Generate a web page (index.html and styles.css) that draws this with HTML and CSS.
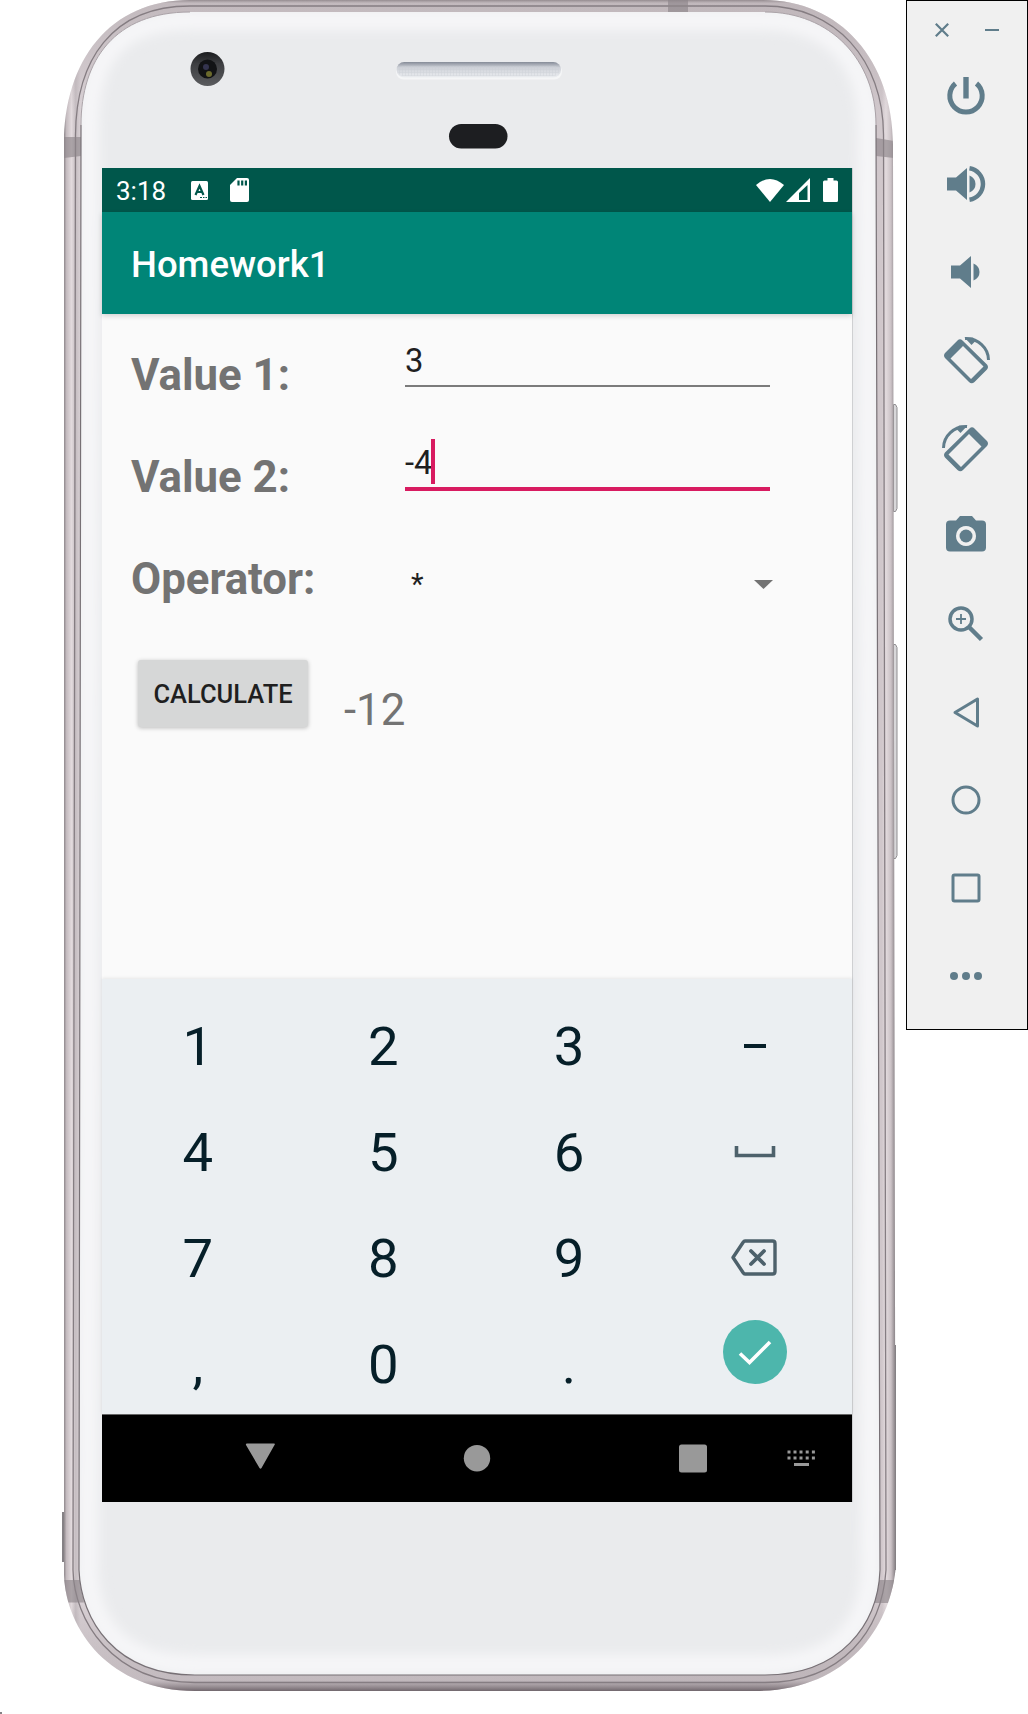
FILE: index.html
```html
<!DOCTYPE html>
<html lang="en">
<head>
<meta charset="utf-8">
<title>Homework1</title>
<link rel="stylesheet" href="styles.css">
</head>
<body>
<div class="stage">
  <div class="phone">
    <svg class="shell" width="906" height="1714" viewBox="0 0 906 1714">
      <defs>
        <linearGradient id="rim" x1="64" x2="896" y1="0" y2="0" gradientUnits="userSpaceOnUse">
          <stop offset="0" stop-color="#8f888c"/><stop offset=".003" stop-color="#c4bbbf"/><stop offset=".009" stop-color="#e2dadd"/><stop offset=".014" stop-color="#c6bec2"/>
          <stop offset=".02" stop-color="#d9d1d5"/><stop offset=".5" stop-color="#d5cdd1"/><stop offset=".983" stop-color="#d0c7cb"/>
          <stop offset=".988" stop-color="#e2dadd"/><stop offset=".994" stop-color="#cbc2c6"/><stop offset="1" stop-color="#7d777b"/>
        </linearGradient>
        <linearGradient id="base" x1="0" x2="0" y1="1600" y2="1691" gradientUnits="userSpaceOnUse">
          <stop offset="0" stop-color="#766d72" stop-opacity="0"/><stop offset=".88" stop-color="#9d9499" stop-opacity=".35"/><stop offset="1" stop-color="#70666c"/>
        </linearGradient>
        <linearGradient id="top" x1="0" x2="0" y1="0" y2="110" gradientUnits="userSpaceOnUse">
          <stop offset="0" stop-color="#8d8488" stop-opacity=".9"/><stop offset=".03" stop-color="#b5acb0" stop-opacity=".6"/><stop offset="1" stop-color="#a79da2" stop-opacity="0"/>
        </linearGradient>
        <filter id="soft" x="-5%" y="-5%" width="110%" height="110%"><feGaussianBlur stdDeviation="6"/></filter>
        <clipPath id="faceclip"><path d="M190 12H765C830 12 876 60 876 125L880 1570C878 1625 840 1675 765 1675H195C115 1675 81 1620 79 1570L81 125C81 60 115 12 190 12Z"/></clipPath>
        <clipPath id="rimclip"><path d="M190 0H763C840 0 893 60 893 145L895.500 1570C889 1630 845 1691 755 1691H195C110 1691 66 1630 64 1575V145C64 60 110 0 190 0Z"/></clipPath>
        <pattern id="mesh" width="3" height="3" patternUnits="userSpaceOnUse"><path d="M0 0H3M0 0V3" stroke="#c9cdd4" stroke-width="1"/></pattern>
        <linearGradient id="slot" x1="0" x2="0" y1="0" y2="1"><stop offset="0" stop-color="#858b97"/><stop offset=".35" stop-color="#cdd0d7"/><stop offset="1" stop-color="#eceef1"/></linearGradient>
        <linearGradient id="lens" x1="0" x2="0" y1="0" y2="1"><stop offset="0" stop-color="#1b1c1e"/><stop offset=".35" stop-color="#3e3f42"/><stop offset="1" stop-color="#5a5b5e"/></linearGradient>
      </defs>
      <path fill="#d8d7d9" stroke="#8f8d90" d="M893.500 404.500h2l1.500 3v101l-1.500 3h-2zM893.500 644.500h2l1.500 3v208l-1.500 3h-2z"/>
      <path fill="#858185" d="M62 1512h3v50h-3zM893 1345h3v225H893zM0 1712h2v2h-2z"/>
      <g clip-path="url(#rimclip)">
        <path fill="url(#rim)" d="M60 0H900V1695H60z"/>
        <path fill="url(#top)" d="M60 0H900V110H60z"/>
        <path fill="url(#base)" d="M60 1600H900V1695H60z"/>
        <path fill="none" stroke="#857d82" stroke-width="1.300" d="M190 6H765C835 6 883.500 60 883.500 135L886 1570C882 1630 843 1682.500 765 1682.500H195C112 1682.500 74 1620 73 1570L75.500 135C76 60 112 6 190 6Z"/>
        <path fill="#8e868a" fill-opacity=".65" d="M64 137L81 137V156L64 158zM876 138L894 141V158L876 156zM668 0h20v12h-20zM64 1580H80L84 1602.500H66zM879 1580H896V1603H874z"/>
      </g>
      <g clip-path="url(#faceclip)">
        <path fill="#eaebed" d="M60 0H900V1700H60z"/>
        <path fill="none" stroke="#f6f6f8" stroke-width="20" filter="url(#soft)" d="M190 20H765C830 20 868 60 868 125L871 1570C869 1625 840 1665 765 1665H195C115 1665 90 1620 88 1570L89 125C89 60 115 20 190 20Z"/>
      </g>
      <path fill="none" stroke="#aaa2a7" d="M190 12C115 12 81 60 81 125M876 125C876 60 830 12 765 12"/>
      <path fill="none" stroke="#777075" stroke-width="1.200" d="M81 125L79 1570C81 1620 115 1675 195 1675H765C840 1675 878 1625 880 1570L876 125"/>
      <circle cx="207.500" cy="69" r="17" fill="url(#lens)"/>
      <circle cx="207.500" cy="69" r="9.500" fill="#121315"/>
      <circle cx="206" cy="67" r="3" fill="#34344e"/><circle cx="209" cy="74" r="3" fill="#6b6a2c"/>
      <rect x="396" y="64" width="166" height="15.500" rx="7.700" fill="#f5f6f7"/>
      <rect x="396.500" y="62" width="164.500" height="15.500" rx="7.700" fill="url(#slot)"/>
      <rect x="398" y="66" width="161" height="10" rx="5" fill="url(#mesh)" opacity=".7"/>
      <rect x="449" y="124" width="58.500" height="24.500" rx="12.200" fill="#1d1e21"/>
      <path stroke="#cfd0d2" d="M852.500 168V1502"/>
    </svg>
    <main class="screen">
      <header class="status">
        <span class="clock">3:18</span>
        <svg width="17" height="19" viewBox="0 0 17 19"><rect width="17" height="19" rx="1.500" fill="#fff"/><path d="M4.500 14L8.500 5L12.500 14M6 11H11" fill="none" stroke="#00574b" stroke-width="2.200"/><path d="M9 16.500h2m1 0h1.500m1 0h1.500" stroke="#00574b" stroke-width="1.200"/></svg>
        <svg class="sd" width="19" height="24" viewBox="0 0 19 24"><path fill="#fff" d="M7 0H17Q19 0 19 2V22Q19 24 17 24H2Q0 24 0 22V7z"/><path stroke="#00574b" stroke-width="2.200" d="M8.500 2.500v5M12.200 2.500v5M15.900 2.500v5"/></svg>
        <span class="spacer"></span>
        <svg width="28" height="23" viewBox="0 0 28 23"><path fill="#fff" d="M0 6Q14-6 28 6L14 23z"/></svg>
        <svg class="signal" width="24" height="24" viewBox="0 0 24 24"><path fill="#fff" fill-rule="evenodd" d="M0 24L24 0V24zM13 22H21.500V7L13 15z"/></svg>
        <svg class="battery" width="15" height="24" viewBox="0 0 15 24"><path fill="#fff" d="M4.500 0h6v2.500H13.500Q15 2.500 15 4V22.500Q15 24 13.500 24H1.500Q0 24 0 22.500V4Q0 2.500 1.500 2.500h3z"/></svg>
      </header>
      <div class="appbar">Homework1</div>
      <section class="form">
        <div class="row"><label>Value 1:</label><div class="field">3</div></div>
        <div class="row"><label>Value 2:</label><div class="field focus">-4<i class="caret"></i></div></div>
        <div class="row"><label>Operator:</label><div class="spinner"><span>*</span><svg width="19" height="9" viewBox="0 0 19 9"><path fill="#737373" d="M0 0H19L9.500 9z"/></svg></div></div>
        <div class="result"><button class="calc">CALCULATE</button><output>-12</output></div>
      </section>
      <section class="keypad">
        <span>1</span><span>2</span><span>3</span><span class="sym"><svg width="24" height="4"><path fill="#061f29" d="M1 0H23V4H1z"/></svg></span>
        <span>4</span><span>5</span><span>6</span><span class="sym"><svg width="42" height="12" viewBox="0 0 42 12"><path fill="none" stroke="#4d616b" stroke-width="3.600" d="M2.500 0V9.500H39.500V0"/></svg></span>
        <span>7</span><span>8</span><span>9</span><span class="sym erase"><svg width="46" height="37" viewBox="0 0 46 37"><path fill="none" stroke="#4d616b" stroke-width="3.400" stroke-linejoin="round" d="M14 2H41.500Q44 2 44 4.500V32.500Q44 35 41.500 35H14Q13 35 12 33.500L2 18.500L12 3.500Q13 2 14 2Z"/><path d="M20 12L33 25M33 12L20 25" stroke="#4d616b" stroke-width="3.800" stroke-linecap="round"/></svg></span>
        <span>,</span><span>0</span><span>.</span><span class="sym enter"><svg width="64" height="64" viewBox="0 0 64 64"><circle cx="32" cy="32" r="32" fill="#4db6ac"/><path fill="none" stroke="#fff" stroke-width="3.600" d="M17 33.500L26.500 42.500L47 22"/></svg></span>
      </section>
      <nav class="navbar">
        <svg width="750" height="87" viewBox="0 0 750 87"><g fill="#999"><path d="M145 28.500H172Q173.500 28.500 172.500 30L159.500 53Q158.500 54.500 157.500 53L144 30Q143.500 28.500 145 28.500z"/><circle cx="375" cy="43.200" r="13.200"/><rect x="577" y="29.500" width="28" height="28" rx="2.500"/><path d="M685.500 35.500h3v3h-3zm6 0h3v3h-3zm6 0h3v3h-3zm6.200 0h3v3h-3zm6.200 0h3v3h-3zM685.500 41.500h3v3h-3zm6 0h3v3h-3zm6 0h3v3h-3zm6.200 0h3v3h-3zm6.200 0h3v3h-3zM692 48h15v3h-15z"/></g></svg>
      </nav>
    </main>
  </div>
  <aside class="toolbar">
    <div class="window">
      <svg width="14" height="14" viewBox="0 0 14 14"><path d="M.8.800L13.200 13.200M13.200.800L.8 13.200" stroke="#607d8b" stroke-width="2.200"/></svg>
      <svg width="14" height="14" viewBox="0 0 14 14"><path d="M0 7H14" stroke="#607d8b" stroke-width="2"/></svg>
    </div>
    <svg class="tool" viewBox="0 0 48 48"><path fill="none" stroke="#607d8b" stroke-width="5" d="M13.500 11.500A16.200 16.200 0 1 0 34.500 11.500"/><path fill="#607d8b" d="M21.300 5h5.400V26.500h-5.400z"/></svg>
    <svg class="tool" viewBox="0 0 48 48"><path fill="#607d8b" d="M5 17.500H14L25 8V40L14 30.500H5zM27.500 15.500Q33.500 18 33.500 24T27.500 32.500z"/><path fill="none" stroke="#607d8b" stroke-width="4.500" d="M27.500 8.200A16 16 0 0 1 27.500 39.800"/></svg>
    <svg class="tool" viewBox="0 0 48 48"><path fill="#607d8b" d="M9 17.500H18L29 8V40L18 30.500H9zM31.500 15.500Q37.500 18 37.500 24T31.500 32.500z"/></svg>
    <svg class="tool" viewBox="0 0 48 48"><g id="rot"><path fill="#607d8b" fill-rule="evenodd" d="M15.500 4.500Q18 2 20.500 4.500L45 28.500Q47 31 45 33.500L32.500 46Q29.500 48.500 27 46L3 22Q1 19.500 3 17zM21 10L8.500 22.500L29 43L41.500 30.500z"/><path fill="none" stroke="#607d8b" stroke-width="3" d="M23 2.500C36 2 46.500 12 46.500 24"/><path fill="#607d8b" d="M22.500 1.500H31L33.500 5L29.500 9z"/></g></svg>
    <svg class="tool" viewBox="0 0 48 48"><use href="#rot" transform="matrix(-1 0 0 1 48 0)"/></svg>
    <svg class="tool" viewBox="0 0 48 48"><path fill="#607d8b" fill-rule="evenodd" d="M18 4H30L34 8.500H40Q44 8.500 44 12.500V35.500Q44 39.500 40 39.500H8Q4 39.500 4 35.500V12.500Q4 8.500 8 8.500H14zM24 14a10 10 0 1 0 .01 0z"/><circle cx="24" cy="24" r="6.500" fill="#607d8b"/></svg>
    <svg class="tool" viewBox="0 0 48 48"><circle cx="19" cy="19" r="11" fill="none" stroke="#607d8b" stroke-width="3.500"/><path stroke="#607d8b" stroke-width="1.800" d="M14 19H24M19 14V24"/><path stroke="#607d8b" stroke-width="4.500" d="M27 27L39.500 39.500"/></svg>
    <svg class="tool" viewBox="0 0 48 48"><path fill="none" stroke="#607d8b" stroke-width="3" stroke-linejoin="round" d="M35.500 11V38L13 24.500z"/></svg>
    <svg class="tool" viewBox="0 0 48 48"><circle cx="24" cy="24" r="13" fill="none" stroke="#607d8b" stroke-width="3"/></svg>
    <svg class="tool" viewBox="0 0 48 48"><rect x="11" y="11" width="26" height="26" rx="1.500" fill="none" stroke="#607d8b" stroke-width="3"/></svg>
    <svg class="tool" viewBox="0 0 48 48"><g fill="#607d8b"><circle cx="12" cy="24" r="4"/><circle cx="24" cy="24" r="4"/><circle cx="36" cy="24" r="4"/></g></svg>
  </aside>
</div>
</body>
</html>
```
FILE: styles.css
```css
* { box-sizing: border-box; }
body { margin: 0; background: #fff; font-family: Roboto, "Liberation Sans", sans-serif; }
svg { display: block; flex: none; }
.stage { display: flex; align-items: flex-start; width: 1028px; height: 1714px; overflow: hidden; }
.phone { position: relative; width: 906px; height: 1714px; padding: 168px 54px 0 102px; }
.shell { position: absolute; left: 0; top: 0; }
.screen { position: relative; width: 750px; height: 1334px; display: flex; flex-direction: column; background: #fafafa; }
.status { height: 44px; flex: none; background: #00574b; display: flex; align-items: center; padding: 0 14px 0 14px; color: #fff; }
.clock { font-size: 26px; line-height: 44px; width: 75px; padding-top: 2px; }
.sd { margin-left: 22px; }
.spacer { flex: 1; }
.signal { margin-left: 2px; }
.battery { margin-left: 13px; }
.appbar { height: 102px; flex: none; background: #008577; color: #fff; font-size: 36.500px; font-weight: 500; line-height: 106px; padding-left: 29px; box-shadow: 0 2px 5px rgba(0,0,0,.16); position: relative; }
.form { height: 665px; flex: none; padding: 10px 82px 0 29px; }
.row { height: 102px; display: flex; align-items: flex-start; }
label { width: 274px; flex: none; color: #737373; font-weight: 700; font-size: 43.750px; line-height: 52px; padding-top: 25px; }
.field { width: 365px; height: 63px; display: flex; align-items: flex-end; font-size: 32.800px; line-height: 38px; padding-bottom: 5px; color: #1f1f1f; border-bottom: 2px solid #7b7b7b; }
.field.focus { height: 65px; border-bottom: 4px solid #d81b60; padding-bottom: 5px; }
.caret { width: 4px; height: 45px; background: #d81b60; margin: 0 0 -2px -2px; }
.spinner { width: 365px; height: 92px; display: flex; align-items: center; justify-content: space-between; padding-left: 6px; font-size: 29.200px; color: #1f1f1f; margin-right: -8px; padding-top: 20px; }
.spinner svg { margin-right: -3px; }
.result { display: flex; align-items: flex-start; padding: 30px 0 0 7px; }
.calc { width: 170px; height: 67px; padding: 2px 0 0; border: 0; border-radius: 3px; background: #d6d7d7; color: #1f1f1f; font: 500 25.500px/65px Roboto, sans-serif; box-shadow: 0 1px 4px rgba(0,0,0,.25); }
output { color: #737373; font-size: 43.750px; line-height: 52px; margin: 24px 0 0 36px; }
.keypad { height: 436px; flex: none; padding: 14px 4px 0 3px; display: grid; grid-template-columns: repeat(4, 185.600px); grid-template-rows: repeat(4, 106px); background: #ebeff2; border-bottom: 1px solid #666; color: #061f29; font-size: 54.500px; text-align: center; line-height: 106px; box-shadow: 0 -1px 3px rgba(0,0,0,.08); }
.sym { display: flex; align-items: center; justify-content: center; padding-bottom: 1px; }
.erase { padding: 0 2px 1px 0; }
.enter { padding-bottom: 25px; }
.navbar { height: 87px; flex: none; background: #000; }
.toolbar { width: 122px; height: 1030px; border: 1px solid #000; background: #f0f0f0; display: flex; flex-direction: column; align-items: center; gap: 40px; padding: 22px 2px 0 0; }
.window { width: 64px; height: 14px; display: flex; justify-content: space-between; margin: 0 0 -5px 2px; }
.tool { width: 48px; height: 48px; }
```
